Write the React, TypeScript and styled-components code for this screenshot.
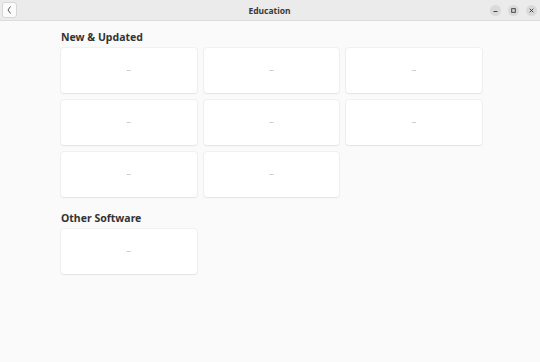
import styled, { createGlobalStyle } from 'styled-components';

const GlobalStyle = createGlobalStyle`
  html, body {
    margin: 0;
    padding: 0;
    background: #fafafa;
    font-family: "Noto Sans", "DejaVu Sans", sans-serif;
  }
`;

const Window = styled.div`
  width: 540px;
  height: 362px;
  display: flex;
  flex-direction: column;
  background: #fafafa;
  overflow: hidden;
`;

const HeaderBar = styled.header`
  height: 20px;
  flex-shrink: 0;
  display: grid;
  grid-template-columns: 1fr auto 1fr;
  align-items: center;
  padding: 0 3px 0 2px;
  background: #ebebeb;
  border-bottom: 1px solid #dcdcdc;
`;

const BackButton = styled.button`
  width: 15px;
  height: 16px;
  padding: 0;
  display: flex;
  align-items: center;
  justify-content: center;
  background: #fbfbfb;
  border: 1px solid #d6d6d6;
  border-radius: 3px;
  color: #444;
  justify-self: start;
`;

const Title = styled.h1`
  margin: 0;
  font-size: 8.5px;
  font-weight: 700;
  color: #3a3a3a;
`;

const Controls = styled.div`
  justify-self: end;
  display: flex;
  gap: 7px;
`;

const ControlButton = styled.span`
  width: 11px;
  height: 11px;
  border-radius: 50%;
  background: #dadada;
  display: flex;
  align-items: center;
  justify-content: center;
`;

const Content = styled.main`
  padding: 10px 58px 0 61px;
  display: flex;
  flex-direction: column;
`;

const SectionTitle = styled.h2`
  margin: 0 0 5px;
  height: 12px;
  line-height: 12px;
  font-size: 10.5px;
  font-weight: 700;
  color: #333;
`;

const Grid = styled.div`
  display: grid;
  grid-template-columns: repeat(3, 1fr);
  gap: 7px 7px;
  margin-bottom: 15px;
`;

const Card = styled.div`
  height: 45px;
  box-sizing: border-box;
  padding-bottom: 4px;
  background: #fff;
  border-radius: 3px;
  box-shadow: 0 0 0 1px rgba(0, 0, 0, 0.035), 0 1px 2px rgba(0, 0, 0, 0.06);
  display: flex;
  align-items: center;
  justify-content: center;
  font-size: 5.5px;
  line-height: 6px;
  color: #6f6f6f;
  letter-spacing: 0.3px;
`;

const sections = [
  { title: 'New & Updated', count: 8 },
  { title: 'Other Software', count: 1 },
];

const App = () => {
  return (
    <>
      <GlobalStyle />
      <Window>
        <HeaderBar>
          <BackButton aria-label="Back">
            <svg width="5" height="8" viewBox="0 0 5 8">
              <path d="M3.5 0.5 L1 4 L3.5 7.5" fill="none" stroke="#444" strokeWidth="0.9" />
            </svg>
          </BackButton>
          <Title>Education</Title>
          <Controls>
            <ControlButton>
              <svg width="5" height="5" viewBox="0 0 5 5">
                <path d="M0.5 3.5 H4.5" stroke="#333" strokeWidth="0.9" />
              </svg>
            </ControlButton>
            <ControlButton>
              <svg width="5" height="5" viewBox="0 0 5 5">
                <rect x="0.7" y="0.7" width="3.6" height="3.6" fill="none" stroke="#333" strokeWidth="0.9" />
              </svg>
            </ControlButton>
            <ControlButton>
              <svg width="5" height="5" viewBox="0 0 5 5">
                <path d="M0.7 0.7 L4.3 4.3 M4.3 0.7 L0.7 4.3" stroke="#333" strokeWidth="0.9" />
              </svg>
            </ControlButton>
          </Controls>
        </HeaderBar>
        <Content>
          {sections.map((section) => (
            <section key={section.title}>
              <SectionTitle>{section.title}</SectionTitle>
              <Grid>
                {Array.from({ length: section.count }).map((_, i) => (
                  <Card key={i}>…</Card>
                ))}
              </Grid>
            </section>
          ))}
        </Content>
      </Window>
    </>
  );
};

export default App;
